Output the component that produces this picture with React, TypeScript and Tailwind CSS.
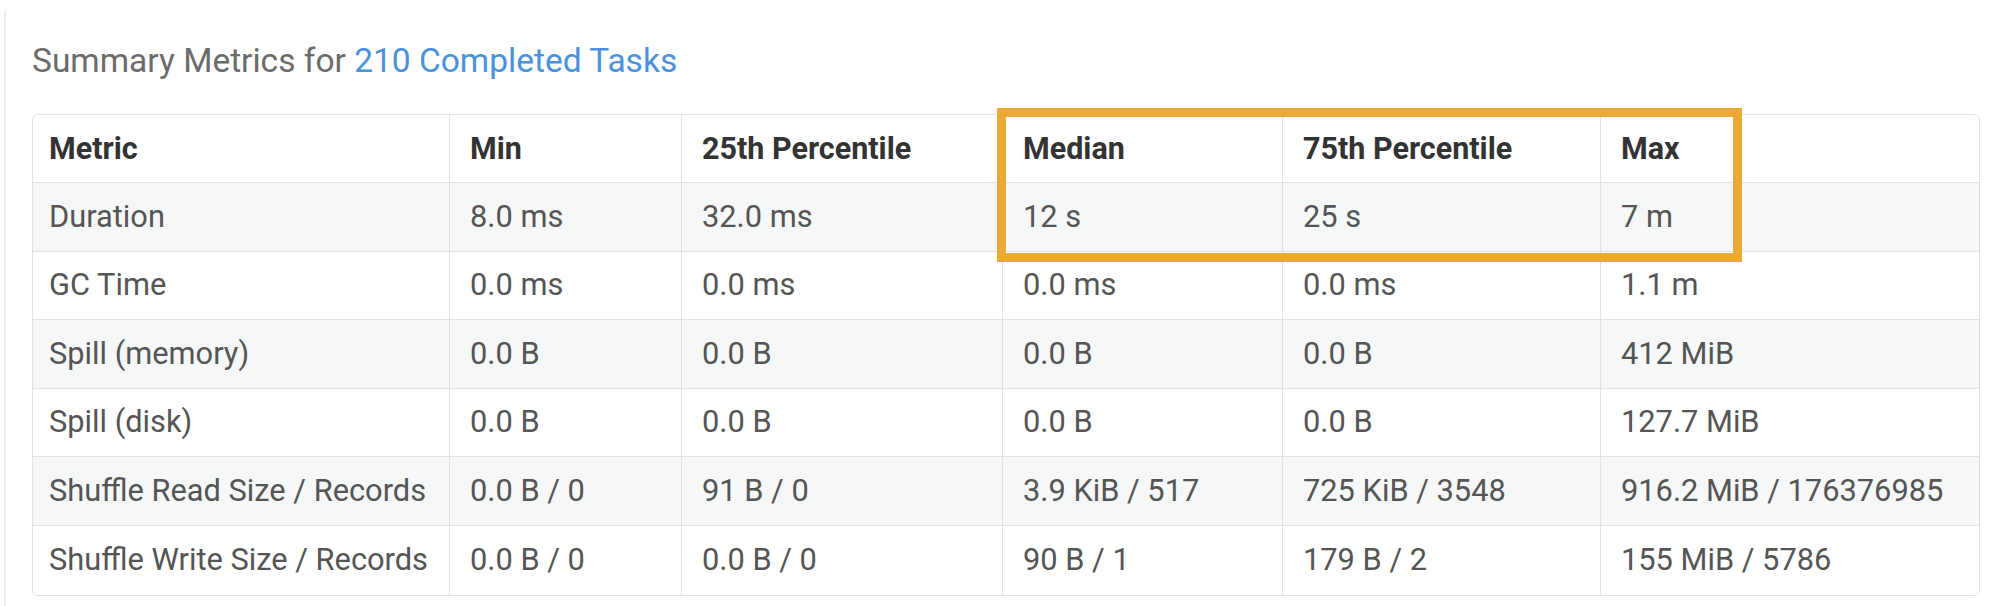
import React from "react";

const headers = ["Metric", "Min", "25th Percentile", "Median", "75th Percentile", "Max"];

const rows: string[][] = [
    ["Duration", "8.0 ms", "32.0 ms", "12 s", "25 s", "7 m"],
    ["GC Time", "0.0 ms", "0.0 ms", "0.0 ms", "0.0 ms", "1.1 m"],
    ["Spill (memory)", "0.0 B", "0.0 B", "0.0 B", "0.0 B", "412 MiB"],
    ["Spill (disk)", "0.0 B", "0.0 B", "0.0 B", "0.0 B", "127.7 MiB"],
    ["Shuffle Read Size / Records", "0.0 B / 0", "91 B / 0", "3.9 KiB / 517", "725 KiB / 3548", "916.2 MiB / 176376985"],
    ["Shuffle Write Size / Records", "0.0 B / 0", "0.0 B / 0", "90 B / 1", "179 B / 2", "155 MiB / 5786"],
];

const gridCols = "grid grid-cols-[417px_232px_321px_280px_318px_1fr]";

const App = () => {
    return (
        <div className="w-[1994px] h-[606px] bg-white overflow-hidden font-['Roboto',sans-serif]">
            <div className="ml-[4px] mt-[10px] h-[596px] border-l-2 border-[#efefef] pl-[26px]">
                <h4 className="pt-[31px] text-[33.5px] leading-[40px] text-[#6b6b6b]">
                    Summary Metrics for <span className="text-[#4a92dc]">210 Completed Tasks</span>
                </h4>

                <div className="relative mt-[33px] w-[1948px]">
                    <div className="border border-[#e2e2e2] rounded-[6px] overflow-hidden">
                        <div className={`${gridCols} h-[68px] border-b border-[#e2e2e2] bg-white text-[30.5px]`}>
                            {headers.map((h, i) => (
                                <div
                                    key={h}
                                    className={`flex items-center ${i === 0 ? "pl-[16px]" : "pl-[20px]"} pr-[8px] font-bold text-[#333333] ${i < headers.length - 1 ? "border-r border-[#e2e2e2]" : ""}`}
                                >
                                    {h}
                                </div>
                            ))}
                        </div>
                        {rows.map((row, r) => (
                            <div
                                key={row[0]}
                                className={`${gridCols} h-[68.6px] text-[30.8px] ${r < rows.length - 1 ? "border-b border-[#e2e2e2]" : ""} ${r % 2 === 0 ? "bg-[#f6f7f8]" : "bg-white"}`}
                            >
                                {row.map((cell, i) => (
                                    <div
                                        key={i}
                                        className={`flex items-center ${i === 0 ? "pl-[16px]" : "pl-[20px]"} pr-[8px] whitespace-nowrap text-[#555555] ${i < row.length - 1 ? "border-r border-[#e2e2e2]" : ""}`}
                                    >
                                        {cell}
                                    </div>
                                ))}
                            </div>
                        ))}
                    </div>

                    {/* highlight around median .. max for duration */}
                    <div className="absolute left-[965px] top-[-6px] w-[745px] h-[154px] border-[9px] border-[#eba935] pointer-events-none" />
                </div>
            </div>
        </div>
    );
};

export default App;
